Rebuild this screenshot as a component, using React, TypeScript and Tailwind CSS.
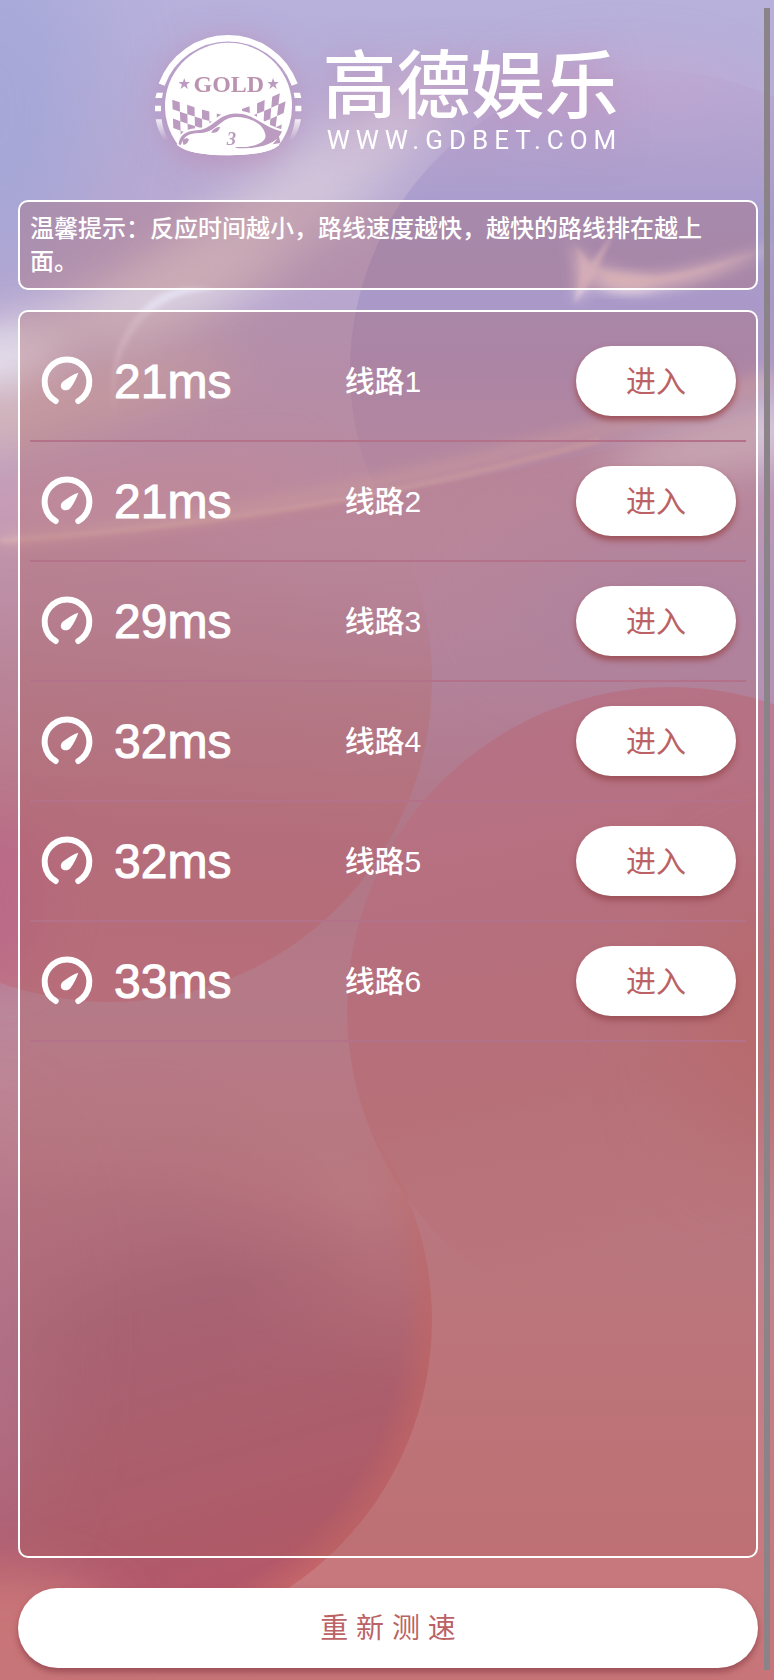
import React from "react";

const routes = [
  { name: "线路1", ping: 21 },
  { name: "线路2", ping: 21 },
  { name: "线路3", ping: 29 },
  { name: "线路4", ping: 32 },
  { name: "线路5", ping: 32 },
  { name: "线路6", ping: 33 },
];

type Point = [number, number];

/** Alternate cells of a checkered flag stretched over four corners. */
function flagCells(tl: Point, tr: Point, br: Point, bl: Point, cols: number, rows: number, sag: number) {
  const at = (u: number, v: number) => {
    const x = (1 - v) * ((1 - u) * tl[0] + u * tr[0]) + v * ((1 - u) * bl[0] + u * br[0]);
    const y = (1 - v) * ((1 - u) * tl[1] + u * tr[1]) + v * ((1 - u) * bl[1] + u * br[1]);
    return `${x.toFixed(1)} ${(y + sag * Math.sin(Math.PI * u)).toFixed(1)}`;
  };
  const parts: string[] = [];
  for (let r = 0; r < rows; r++) {
    for (let c = 0; c < cols; c++) {
      if ((r + c) % 2) continue;
      parts.push(
        `M${at(c / cols, r / rows)}L${at((c + 1) / cols, r / rows)}L${at((c + 1) / cols, (r + 1) / rows)}L${at(c / cols, (r + 1) / rows)}Z`,
      );
    }
  }
  return parts.join("");
}

const leftFlag = flagCells([100, 238], [256, 286], [256, 400], [104, 352], 7, 4, 2);
const rightFlag = flagCells([264, 282], [446, 208], [424, 348], [284, 395], 8, 4, 4);

function Badge() {
  return (
    <svg viewBox="45 35 448 372" className="h-[124px] w-[149px] shrink-0" aria-hidden="true">
      <defs>
        <linearGradient id="fade" x1="0" y1="0" x2="0" y2="1">
          <stop offset="0" stopColor="#fff" stopOpacity="0.8" />
          <stop offset="1" stopColor="#fff" stopOpacity="0" />
        </linearGradient>
      </defs>
      <path d="M68 193A213 213 0 0 1 468 193" fill="none" stroke="#fff" strokeWidth="19" />
      <path d="M53 217h19l-3 16H49zM48 256h18v17H48zM465 217h19l4 16h-20zM470 256h18v17h-18z" fill="#fff" />
      <path d="M50 297h18q4 34 20 64h-12Q56 332 50 297zM487 297h-18q-4 34-20 64h12q20-29 26-64z" fill="url(#fade)" />
      <path d="M118 375A191 191 0 1 1 420 375Q388 405 268 405Q150 405 118 375Z" fill="#fff" />
      <g fill="#bb9bbf">
        <path d={leftFlag} />
        <path d={rightFlag} />
        <path d="M136 173l4 12h13l-10 8 4 13-11-8-11 8 4-13-10-8h13zM403 173l4 12h13l-10 8 4 13-11-8-11 8 4-13-10-8h13z" />
      </g>
      <path
        d="M114 374C116 344 134 326 172 324C220 324 228 274 292 270C354 272 378 318 434 328L420 376Q380 405 268 405Q150 405 114 374Z"
        fill="#fff"
      />
      <path
        d="M119 372C122 346 138 332 174 330C222 330 232 281 292 280C346 280 374 322 430 334C416 368 372 386 306 384C296 384 290 382 288 380C340 384 384 368 380 344C376 312 336 290 290 290C246 290 234 336 186 338C152 337 134 346 126 374Z"
        fill="#bb9bbf"
      />
      <path
        d="M244 320C234 320 222 326 217 337C230 340 240 334 244 320ZM132 358Q146 350 150 358Q146 372 134 374Q129 366 132 358ZM420 344L425 368L402 372Q414 362 420 344Z"
        fill="#bb9bbf"
      />
      <text x="270" y="215" textAnchor="middle" fill="#bb93b0" className="font-['Liberation_Serif'] text-[72px] font-bold">
        GOLD
      </text>
      <text x="264" y="374" fill="#bb9bbf" className="font-['Liberation_Serif'] text-[56px] font-bold italic">
        3
      </text>
    </svg>
  );
}

function Gauge() {
  return (
    <svg viewBox="0 0 162 162" className="size-[54px] shrink-0" aria-hidden="true">
      <path d="M47 138A67 67 0 1 1 115 138" fill="none" stroke="#fff" strokeWidth="18" strokeLinecap="round" />
      <path d="M115 53C110 68 101 86 92 98C86 107 72 108 66 102C60 95 62 85 70 79C82 69 99 58 115 53Z" fill="#fff" />
    </svg>
  );
}

function Backdrop() {
  return (
    <svg
      viewBox="0 0 774 1680"
      preserveAspectRatio="none"
      className="absolute inset-0 -z-10 size-full"
      aria-hidden="true"
    >
      <defs>
        <linearGradient id="sky" x1="0" y1="0" x2="0" y2="1">
          <stop offset="0" stopColor="#b7b1dc" />
          <stop offset="0.1" stopColor="#b8aad3" />
          <stop offset="0.2" stopColor="#b9a5cd" />
          <stop offset="0.3" stopColor="#c39dba" />
          <stop offset="0.4" stopColor="#b793b6" />
          <stop offset="0.5" stopColor="#b58299" />
          <stop offset="0.6" stopColor="#bb879b" />
          <stop offset="0.7" stopColor="#c08490" />
          <stop offset="0.85" stopColor="#c67d84" />
          <stop offset="1" stopColor="#c77578" />
        </linearGradient>
        <linearGradient id="orbTop" x1="0.2" y1="0" x2="0.2" y2="1">
          <stop offset="0" stopColor="#b794c6" stopOpacity="0.1" />
          <stop offset="0.25" stopColor="#9f98cc" stopOpacity="0.75" />
          <stop offset="0.5" stopColor="#a78fc0" stopOpacity="0.65" />
          <stop offset="0.8" stopColor="#b38db0" stopOpacity="0" />
        </linearGradient>
        <linearGradient id="orbLeft" x1="0.55" y1="0" x2="0.45" y2="1">
          <stop offset="0.25" stopColor="#bd8798" stopOpacity="0" />
          <stop offset="0.5" stopColor="#ba7f8d" stopOpacity="0.7" />
          <stop offset="0.75" stopColor="#ba7387" stopOpacity="0.95" />
          <stop offset="1" stopColor="#bf7587" />
        </linearGradient>
        <linearGradient id="orbRight" x1="0.3" y1="0" x2="0.5" y2="1">
          <stop offset="0" stopColor="#bc7c98" stopOpacity="0.95" />
          <stop offset="0.35" stopColor="#bd778c" stopOpacity="0.95" />
          <stop offset="0.6" stopColor="#be757f" stopOpacity="0.75" />
          <stop offset="0.9" stopColor="#c2757a" stopOpacity="0" />
        </linearGradient>
        <linearGradient id="orbBottom" x1="0.3" y1="0.1" x2="0.55" y2="0.95">
          <stop offset="0.05" stopColor="#ad7590" stopOpacity="0" />
          <stop offset="0.5" stopColor="#a3617b" stopOpacity="0.85" />
          <stop offset="1" stopColor="#b3586a" />
        </linearGradient>
        <radialGradient id="rim" cx="0.5" cy="0.5" r="0.5">
          <stop offset="0.9" stopColor="#cd6c68" stopOpacity="0" />
          <stop offset="1" stopColor="#cd6c68" stopOpacity="0.65" />
        </radialGradient>
        <radialGradient id="orbEdge" cx="0.45" cy="0.55" r="0.48">
          <stop offset="0.5" stopColor="#fff" />
          <stop offset="1" stopColor="#000" />
        </radialGradient>
        <linearGradient id="lowerHalf" x1="0" y1="0.3" x2="0" y2="0.6">
          <stop offset="0" stopColor="#fff" stopOpacity="0" />
          <stop offset="1" stopColor="#fff" />
        </linearGradient>
        <linearGradient id="rimFade" x1="0.5" y1="0.25" x2="0.7" y2="0.65">
          <stop offset="0.3" stopColor="#000" />
          <stop offset="1" stopColor="#fff" />
        </linearGradient>
        <mask id="bottomMask">
          <circle cx="110" cy="1320" r="322" fill="url(#orbEdge)" />
          <circle cx="110" cy="1320" r="322" fill="url(#lowerHalf)" />
        </mask>
        <mask id="rimMask">
          <circle cx="110" cy="1320" r="322" fill="url(#rimFade)" />
        </mask>
        <linearGradient id="below" x1="0" y1="0" x2="0.5" y2="1">
          <stop offset="0" stopColor="#cc92a4" stopOpacity="0.7" />
          <stop offset="0.8" stopColor="#b98a9f" stopOpacity="0" />
        </linearGradient>
        <linearGradient id="crescent" x1="0" y1="0" x2="0" y2="1">
          <stop offset="0" stopColor="#e4e1f3" />
          <stop offset="0.5" stopColor="#e6dbe8" stopOpacity="0.5" />
          <stop offset="1" stopColor="#e6d5e0" stopOpacity="0" />
        </linearGradient>
        <filter id="b3" x="-30%" y="-30%" width="160%" height="160%"><feGaussianBlur stdDeviation="2" /></filter>
        <filter id="b8" x="-40%" y="-60%" width="180%" height="220%"><feGaussianBlur stdDeviation="7" /></filter>
        <filter id="b25" x="-60%" y="-150%" width="220%" height="400%"><feGaussianBlur stdDeviation="24" /></filter>
        <filter id="b60" x="-100%" y="-100%" width="300%" height="300%"><feGaussianBlur stdDeviation="50" /></filter>
      </defs>
      <rect width="774" height="1680" fill="url(#sky)" />
      <ellipse cx="0" cy="110" rx="90" ry="180" fill="#a0a6d8" opacity="0.8" filter="url(#b60)" />
      <ellipse cx="620" cy="90" rx="120" ry="36" fill="#c3a8d0" opacity="0.6" filter="url(#b25)" />
      <ellipse cx="270" cy="220" rx="220" ry="44" fill="#d6c9dc" opacity="0.85" filter="url(#b25)" transform="rotate(-38 270 220)" />
      <circle cx="650" cy="370" r="300" fill="url(#orbTop)" />
      <ellipse cx="90" cy="320" rx="200" ry="26" fill="#e0d6de" opacity="0.85" filter="url(#b25)" transform="rotate(-24 90 320)" />
      <ellipse cx="-5" cy="360" rx="60" ry="26" fill="#eeedf8" opacity="0.8" filter="url(#b25)" />
      <ellipse cx="10" cy="420" rx="240" ry="24" fill="#dbbcb4" opacity="0.8" filter="url(#b25)" transform="rotate(-14 10 420)" />
      <ellipse cx="90" cy="500" rx="220" ry="18" fill="#cf9aac" opacity="0.6" filter="url(#b25)" transform="rotate(-10 90 500)" />
      <path d="M215 290C172 278 135 302 117 350C107 382 110 404 118 424C115 396 114 376 123 352C142 310 174 290 215 290Z" fill="url(#crescent)" filter="url(#b3)" />
      <path d="M0 541Q330 520 774 412V720H0Z" fill="url(#below)" />
      <ellipse cx="690" cy="600" rx="190" ry="60" fill="#ae91bb" opacity="0.75" filter="url(#b60)" />
      <ellipse cx="770" cy="430" rx="170" ry="30" fill="#ddd2e2" opacity="0.9" filter="url(#b25)" transform="rotate(-14 770 430)" />
      <path d="M0 540Q330 515 774 378" fill="none" stroke="#dcb7b8" strokeWidth="14" opacity="0.55" filter="url(#b8)" />
      <path d="M0 541Q330 518 600 440" fill="none" stroke="#e5c0ba" strokeWidth="4" opacity="0.6" filter="url(#b3)" />
      <path d="M774 246Q700 288 640 291C616 292 606 286 596 276C590 284 584 292 576 302C578 280 578 262 568 236C580 258 592 266 612 270C650 284 700 268 774 246Z" fill="#ead6e2" filter="url(#b8)" />
      <ellipse cx="622" cy="283" rx="30" ry="7" fill="#ecdae4" opacity="0.9" filter="url(#b8)" />
      <path d="M774 246Q700 276 650 284C630 288 610 286 598 270C640 284 690 276 774 246Z" fill="#ecd4d8" opacity="0.6" filter="url(#b3)" />
      <path d="M574 304L582 270L576 246L590 264L614 232L596 272Z" fill="#e8d0de" opacity="0.7" filter="url(#b3)" />
      <circle cx="110" cy="680" r="322" fill="url(#orbLeft)" />
      <ellipse cx="-10" cy="900" rx="60" ry="80" fill="#ba6687" opacity="0.7" filter="url(#b25)" />
      <circle cx="670" cy="1010" r="323" fill="url(#orbRight)" />
      <ellipse cx="790" cy="1020" rx="100" ry="140" fill="#bd6a68" opacity="0.6" filter="url(#b60)" />
      <circle cx="110" cy="1320" r="322" fill="url(#orbBottom)" mask="url(#bottomMask)" />
      <circle cx="110" cy="1320" r="322" fill="url(#rim)" mask="url(#rimMask)" />
      <ellipse cx="-30" cy="1330" rx="60" ry="200" fill="#b6748a" opacity="0.9" filter="url(#b60)" />
      <ellipse cx="0" cy="1630" rx="120" ry="60" fill="#c87578" filter="url(#b25)" />
    </svg>
  );
}

export default function App() {
  return (
    <main className="relative isolate flex min-h-screen flex-col overflow-hidden pr-4 pb-3 pl-[18px] font-['Liberation_Sans','Noto_Sans_CJK_SC',sans-serif] text-white">
      <Backdrop />

      <header className="flex h-[200px] items-start justify-center gap-4 pt-8 drop-shadow-[0_4px_16px_rgba(190,120,160,0.5)]">
        <Badge />
        <div className="flex flex-col items-center pt-2">
          <h1 className="font-['Noto_Sans_CJK_SC',sans-serif] text-[74px] leading-[80px] font-medium whitespace-nowrap">高德娱乐</h1>
          <p className="pt-1 pl-2 font-[Roboto,sans-serif] text-[26px] leading-8 tracking-[6px]">WWW.GDBET.COM</p>
        </div>
      </header>

      <p className="rounded-[10px] border-2 border-white bg-[#a85c5d]/30 p-[10px] text-[24px] leading-[33px] font-medium">
        温馨提示：反应时间越小，路线速度越快，越快的路线排在越上面。
      </p>

      <ul className="mt-5 flex-1 rounded-[10px] border-2 border-white bg-[#a85c5d]/30 p-[10px]">
        {routes.map((route) => (
          <li key={route.name} className="flex h-[120px] items-center border-b-2 border-[#b4728a] pr-[10px]">
            <div className="flex w-[44%] items-center gap-5 pt-[2px] pl-[10px]">
              <Gauge />
              <span className="text-5xl [-webkit-text-stroke:1px_white]">{route.ping}ms</span>
            </div>
            <span className="flex-1 pl-1 text-[30px] font-medium">{route.name}</span>
            <button
              type="button"
              className="h-[70px] w-[160px] rounded-full bg-white text-[30px] text-[#bb6265] shadow-[0_4px_6px_#9c4f56]"
            >
              进入
            </button>
          </li>
        ))}
      </ul>

      <button
        type="button"
        className="mt-[30px] h-20 w-full rounded-full bg-white pt-[2px] text-[28px] text-[#bb6265] shadow-[0_4px_6px_#9c4f56]"
      >
        重 新 测 速
      </button>

      <div className="absolute top-2 right-1 bottom-[10px] w-[6px] bg-[#8a8488]" />
    </main>
  );
}
